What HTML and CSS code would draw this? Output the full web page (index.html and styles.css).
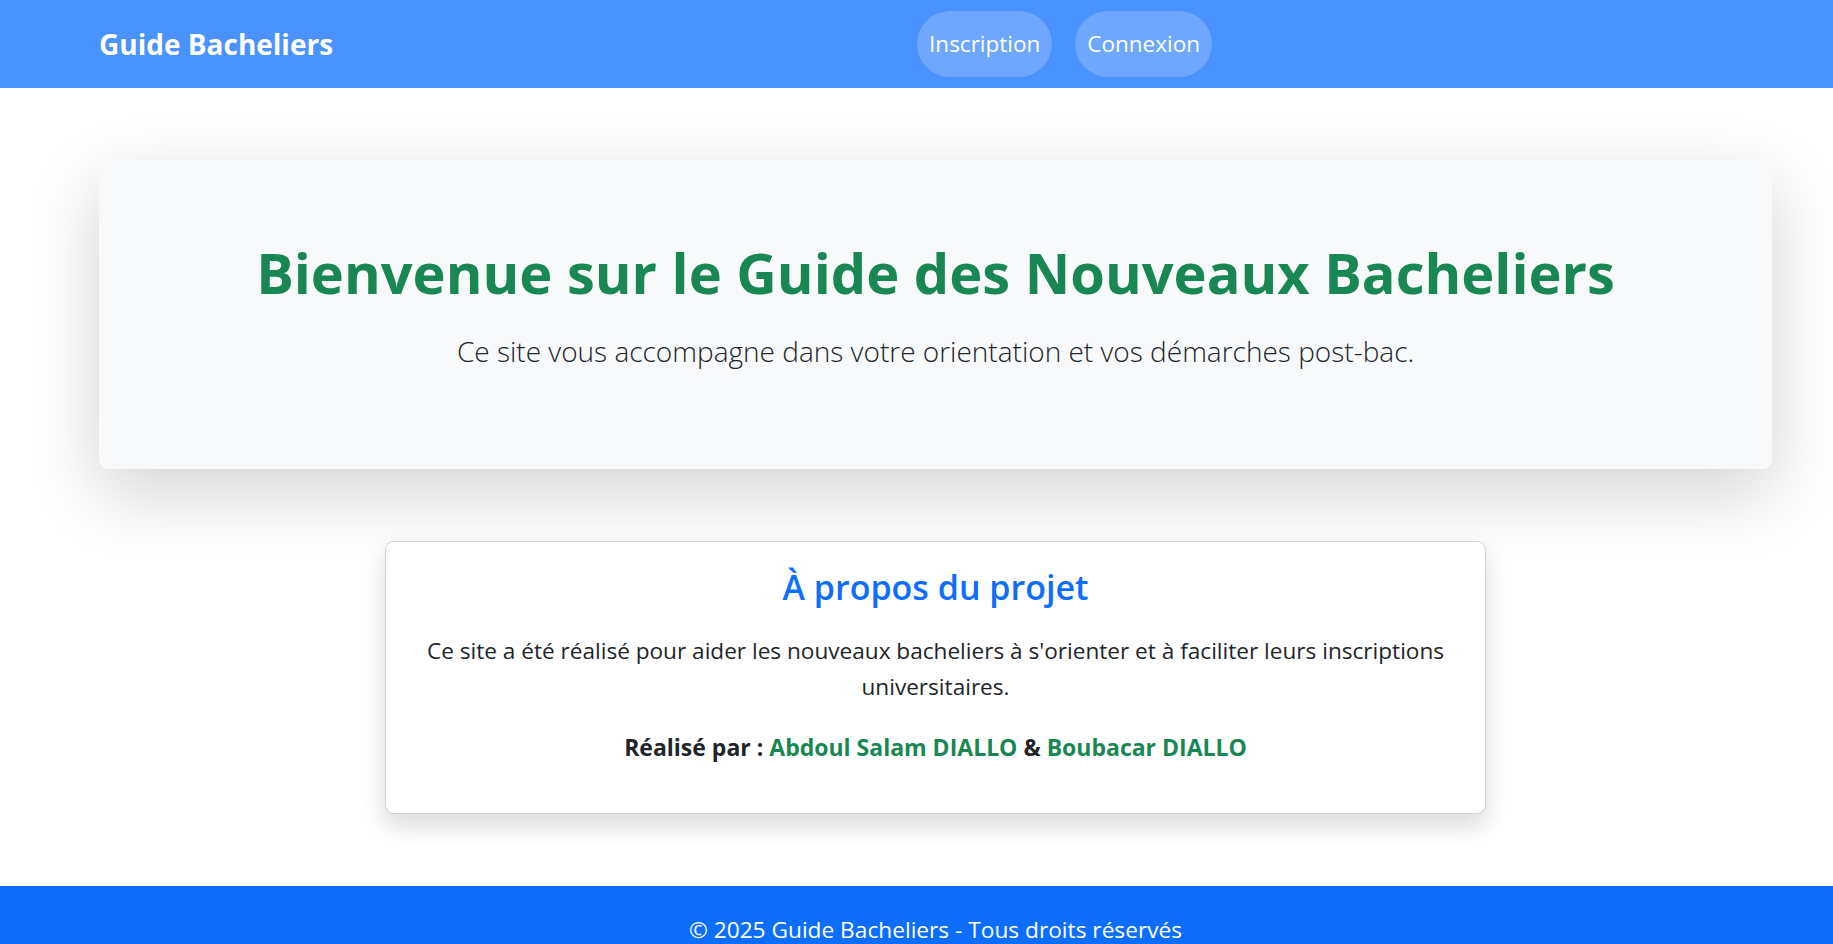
FILE: index.html
```html
<!DOCTYPE html>
<html lang="fr">
<head>
<meta charset="utf-8">
<title>Guide Bacheliers</title>
<link rel="stylesheet" href="styles.css">
</head>
<body>
<nav class="navbar">
  <div class="nav-inner">
    <a class="brand" href="#">Guide Bacheliers</a>
    <ul class="nav-links">
      <li><a class="pill" href="#">Inscription</a></li>
      <li><a class="pill" href="#">Connexion</a></li>
    </ul>
  </div>
</nav>
<main class="container">
  <section class="hero">
    <h1 class="hero-title">Bienvenue sur le Guide des Nouveaux Bacheliers</h1>
    <p class="lead">Ce site vous accompagne dans votre orientation et vos démarches post-bac.</p>
  </section>
  <section class="about-card">
    <h4 class="about-title">À propos du projet</h4>
    <p class="about-text">Ce site a été réalisé pour aider les nouveaux bacheliers à s'orienter et à faciliter leurs inscriptions universitaires.</p>
    <p class="about-text credits"><strong>Réalisé par : <span class="name">Abdoul Salam DIALLO</span> &amp; <span class="name">Boubacar DIALLO</span></strong></p>
  </section>
</main>
<footer class="footer">
  <div class="container">
    <p class="footer-text">© 2025 Guide Bacheliers - Tous droits réservés</p>
  </div>
</footer>
</body>
</html>
```
FILE: styles.css
```css
* { box-sizing: border-box; }
body {
  margin: 0;
  font-family: "Open Sans", "Noto Sans", sans-serif;
  font-size: 22.6px;
  line-height: 36px;
  color: #212529;
  background: #fff;
}
a { text-decoration: none; }
.navbar {
  background: #4a92fd;
  height: 88px;
}
.nav-inner {
  width: 1673px;
  margin-left: 99px;
  height: 100%;
  display: flex;
  align-items: center;
}
.brand {
  font-size: 28px;
  font-weight: 700;
  color: #fff;
  margin-right: 24px;
  line-height: 45px;
}
.nav-links {
  display: flex;
  gap: 23px;
  margin: 0 auto;
  padding: 0;
  list-style: none;
}
.pill {
  display: block;
  padding: 15px 12px;
  font-size: 22.5px;
  line-height: 36px;
  background: rgba(255, 255, 255, 0.2);
  border-radius: 999px;
  color: #fff;
}
.container {
  width: 1673px;
  margin-left: 99px;
}
.hero {
  margin-top: 72px;
  background: #f8f9fa;
  border-radius: 9px;
  padding: 76px 72px 71px;
  text-align: center;
  box-shadow: 0 24px 72px rgba(0, 0, 0, 0.175);
}
.hero-title {
  margin: 0 0 21px;
  font-size: 56px;
  line-height: 72px;
  font-weight: 700;
  color: #198754;
}
.lead {
  margin: 0 0 24px;
  font-size: 28px;
  line-height: 45px;
  font-weight: 300;
}
.about-card {
  width: 1101px;
  margin: 72px auto 0;
  background: #fff;
  border: 1px solid rgba(0, 0, 0, 0.175);
  border-radius: 9px;
  padding: 24px;
  text-align: center;
  box-shadow: 0 12px 24px rgba(0, 0, 0, 0.15);
}
.about-title {
  margin: 0 0 24px;
  font-size: 34px;
  line-height: 43px;
  font-weight: 600;
  color: #0d6efd;
}
.about-text {
  margin: 0 0 24px;
}
.credits { font-size: 23px; }
.credits strong { font-weight: 700; }
.name { color: #198754; }
.footer {
  margin-top: 72px;
  background: #0d6efd;
  color: #fff;
  padding: 26px 0 24px;
}
.footer-text {
  margin: 0;
  font-size: 22.7px;
  text-align: center;
}
```
